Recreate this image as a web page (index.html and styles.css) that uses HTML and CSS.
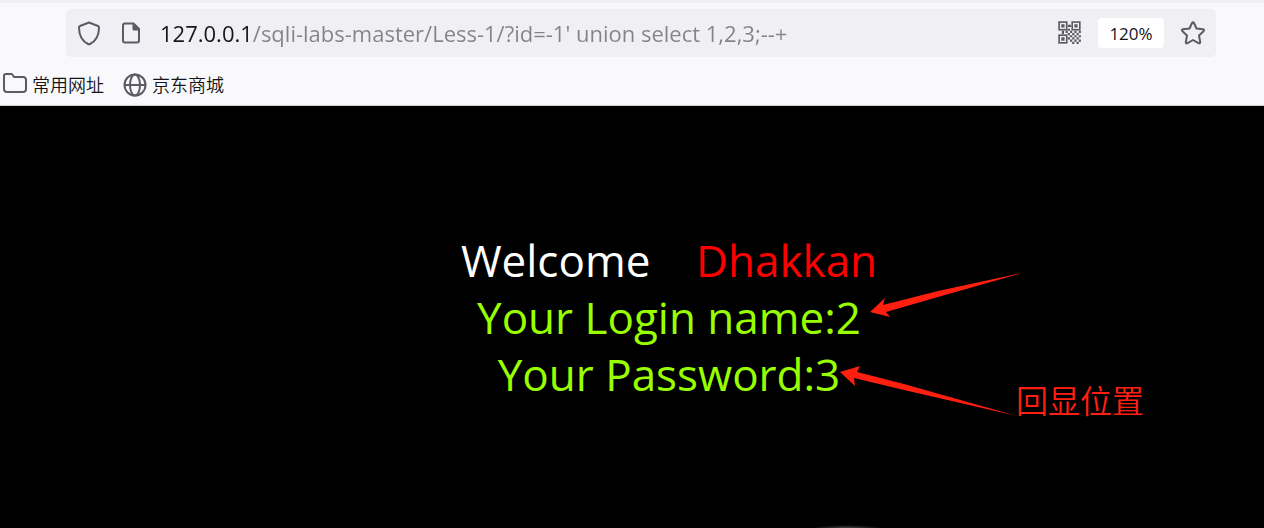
FILE: index.html
```html
<!DOCTYPE html>
<html lang="zh-CN">
<head>
  <meta charset="UTF-8" />
  <title>Less-1</title>
  <link rel="stylesheet" href="styles.css">
</head>
<body>

  <header class="browser">
    <div class="tab-strip"></div>

    <form class="address-bar">
      <button type="button" class="icon-btn" aria-label="Protection">
        <svg width="26" height="26" viewBox="0 0 26 26" fill="none" stroke="#5b5b66" stroke-width="2" stroke-linejoin="round">
          <path d="M13 2.500 L22 6 Q23 6.500 23 7.500 C23 15 20 21 14 24 Q13 24.500 12 24 C6 21 3 15 3 7.500 Q3 6.500 4 6 Z"/>
        </svg>
      </button>
      <button type="button" class="icon-btn" aria-label="Site information">
        <svg width="26" height="26" viewBox="0 0 26 26">
          <path d="M15.500 3.500 H7 Q5 3.500 5 5.500 V20.500 Q5 22.500 7 22.500 H19 Q21 22.500 21 20.500 V9 Z" fill="none" stroke="#5b5b66" stroke-width="2" stroke-linejoin="round"/>
          <path d="M14.500 3 H16 L22 9 V10.500 H16 Q14.500 10.500 14.500 9 Z" fill="#5b5b66"/>
        </svg>
      </button>
      <input class="url" type="text" aria-label="Address" spellcheck="false" value="127.0.0.1/sqli-labs-master/Less-1/?id=-1' union select 1,2,3;--+" />
      <button type="button" class="icon-btn" aria-label="QR code">
        <svg width="24" height="24" viewBox="0 0 22 22">
          <g fill="none" stroke="#5b5b66" stroke-width="1.500">
            <rect x="1" y="1" width="7" height="7"/>
            <rect x="13" y="1" width="7" height="7"/>
            <rect x="1" y="13" width="7" height="7"/>
          </g>
          <path fill="#5b5b66" d="M3 3h3v3H3z M15 3h3v3h-3z M3 15h3v3H3z M9 3.500h3v2H9z M3.500 9h2v3h-2z M9 7h2v2H9z M7 9h2v2H7z M11 9h2v2h-2z M15 9h2v2h-2z M19 9h2v2h-2z M9 11h2v2H9z M13 11h2v2h-2z M17 11h2v2h-2z M11 13h2v2h-2z M15 13h2v2h-2z M19 13h2v2h-2z M9 15h2v2H9z M13 15h2v2h-2z M17 15h2v2h-2z M11 17h2v2h-2z M15 17h2v2h-2z M19 17h2v2h-2z M13 19h2v2h-2z M17 19h2v2h-2z"/>
        </svg>
      </button>
      <button type="button" class="zoom-level">120%</button>
      <button type="button" class="icon-btn" aria-label="Bookmark">
        <svg width="26" height="26" viewBox="0 0 26 26" fill="none" stroke="#5b5b66" stroke-width="2" stroke-linejoin="round">
          <path d="M12 3 Q13 1.500 14 3 L16.500 8.500 L23 9.300 Q24.800 9.800 23.500 11.200 L19 15.500 L20.200 22 Q20.200 24 18.500 23.200 L13 20 L7.500 23.200 Q5.800 24 5.800 22 L7 15.500 L2.500 11.200 Q1.200 9.800 3 9.300 L9.500 8.500 Z"/>
        </svg>
      </button>
    </form>

    <nav class="bookmarks">
      <a href="#">
        <svg width="24" height="24" viewBox="0 0 24 24" fill="none" stroke="#5b5b66" stroke-width="2" stroke-linejoin="round">
          <path d="M3 1 H8 Q9 1 9.500 1.800 L11 4 H20 Q23 4 23 7 V16 Q23 19 20 19 H4 Q1 19 1 16 V3 Q1 1 3 1 Z"/>
        </svg>
        常用网址
      </a>
      <a href="#">
        <svg width="24" height="24" viewBox="0 0 24 24" fill="none" stroke="#5b5b66" stroke-width="2">
          <circle cx="12" cy="12" r="10.500"/>
          <ellipse cx="12" cy="12" rx="5" ry="10.500"/>
          <path d="M2 12 H22"/>
        </svg>
        京东商城
      </a>
    </nav>
  </header>

  <main class="page">
    <div class="result">
      <p class="welcome">Welcome&nbsp;&nbsp;&nbsp; <span class="name">Dhakkan</span></p>
      <p class="row">Your Login name:2</p>
      <p class="row">Your Password:3</p>
    </div>

    <!-- arrows and note over the result -->
    <div class="note">
      <svg width="185" height="150" viewBox="0 0 185 150" fill="#ff1f10" aria-hidden="true">
        <path d="M30 42 L45 28 L43 35 L98 21 L182 3 L98 27 L46 42 L50 47 Z"/>
        <path d="M0 102 L20 96 L17 102 L64 114 L177 146 L64 120 L14 108 L15 116 Z"/>
      </svg>
      <span>回显位置</span>
    </div>
  </main>

</body>
</html>
```
FILE: styles.css
```css
* {
  box-sizing: border-box;
}
body {
  margin: 0;
  min-height: 100vh;
  display: flex;
  flex-direction: column;
  background: #000;
  font-family: "Open Sans", "Noto Sans CJK SC", sans-serif;
}
button {
  border: none;
  padding: 0;
  background: none;
  font: inherit;
  cursor: pointer;
}
svg {
  display: block;
}

/* Browser chrome */
.browser {
  background: #f9f9fb;
  border-bottom: 1px solid #ccc;
}
.tab-strip {
  height: 3px;
  background: #f0f0f2;
}
.address-bar {
  display: flex;
  align-items: center;
  gap: 16px;
  height: 48px;
  margin: 6px 48px 0 66px;
  padding: 0 10px;
  background: #f0f0f4;
  border-radius: 5px;
}
.icon-btn {
  flex: none;
}
.url {
  flex: 1;
  min-width: 0;
  height: 40px;
  padding: 0;
  border: none;
  outline: none;
  font-family: "Open Sans", sans-serif;
  font-size: 22px;
  /* host is dark, the path is grey */
  color: transparent;
  background: linear-gradient(to right, #15141a 91px, #848387 91px);
  -webkit-background-clip: text;
  background-clip: text;
}
.zoom-level {
  width: 66px;
  height: 30px;
  background: #fff;
  border-radius: 4px;
  color: #15141a;
  font-size: 17px;
}
.bookmarks {
  display: flex;
  align-items: center;
  gap: 19px;
  height: 48px;
  padding: 7px 3px 0;
}
.bookmarks a {
  display: flex;
  align-items: center;
  gap: 5px;
  color: #15141a;
  font-size: 18px;
  font-weight: 350;
  line-height: 24px;
  text-decoration: none;
}

/* Page */
.page {
  flex: 1;
  position: relative;
  padding: 126px 0 0 74px;
  background: radial-gradient(ellipse 36px 3px at 67% 100%, #444, #000) #000;
}
.result {
  text-align: center;
  font-size: 44px;
  line-height: 57px;
}
.result p {
  margin: 0;
}
.welcome {
  color: #fff;
}
.name {
  color: #f00;
}
.row {
  color: #9f0;
}
.note {
  position: absolute;
  top: 164px;
  left: calc(50% + 208px);
  display: flex;
  align-items: flex-end;
  color: #ff1f10;
  font-family: "Noto Sans CJK SC", sans-serif;
  font-size: 32px;
  font-weight: 350;
  line-height: 42px;
}
.note span {
  margin-left: -9px;
  white-space: nowrap;
}
```
